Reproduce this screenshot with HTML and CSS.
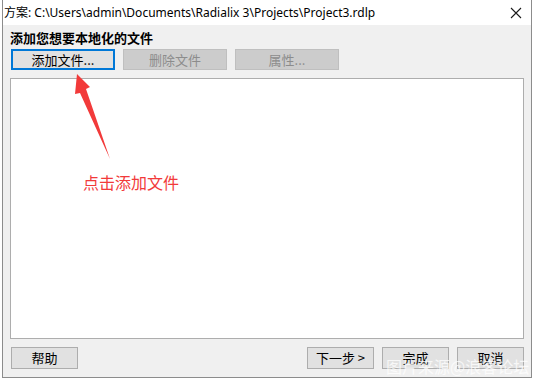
FILE: index.html
```html
<!DOCTYPE html>
<html lang="zh-CN">
<head>
<meta charset="UTF-8">
<title>添加文件</title>
<link rel="stylesheet" href="styles.css">
</head>
<body>

<div class="window">
    <div class="titlebar">
        <span class="title">方案: C:\Users\admin\Documents\Radialix 3\Projects\Project3.rdlp</span>
        <svg class="close" width="12" height="12" viewBox="0 0 12 12">
            <path d="M1 1 L11 11 M11 1 L1 11" stroke="#1a1a1a" stroke-width="1.1" fill="none"/>
        </svg>
    </div>

    <div class="content">
        <div class="heading">添加您想要本地化的文件</div>

        <div class="toolbar">
            <button class="btn focus">添加文件...</button>
            <button class="btn disabled">删除文件</button>
            <button class="btn disabled">属性...</button>
        </div>

        <div class="filelist"></div>

        <div class="footer">
            <button class="btn small">帮助</button>
            <div class="spacer"></div>
            <button class="btn small">下一步 &gt;</button>
            <button class="btn small">完成</button>
            <button class="btn small">取消</button>
        </div>
    </div>

    <!-- annotation drawn on top of the screenshot -->
    <svg class="arrow" width="60" height="100" viewBox="0 0 60 100">
        <polygon points="5,3 18,16 14,18 38,88 8,22 3,23" fill="#f23a3a"/>
    </svg>
    <div class="note">点击添加文件</div>
    <div class="watermark">图片来源@浪客论坛</div>
</div>

</body>
</html>
```

FILE: styles.css
```css
body {
    margin: 0;
    width: 534px;
    height: 380px;
    overflow: hidden;
    background-color: #ffffff;
    font-family: "Noto Sans", "Noto Sans CJK SC", sans-serif;
    font-size: 12px;
    color: #000;
}
.window {
    position: relative;
    box-sizing: border-box;
    margin-left: 2px;
    width: 530px;
    height: 378px;
    border: 1px solid #8c8c8c;
    border-top: none;
    background-color: #f0f0f0;
    display: flex;
    flex-direction: column;
}
.titlebar {
    height: 25px;
    background-color: #ffffff;
    display: flex;
    align-items: center;
    padding-left: 1px;
    padding-right: 9px;
}
.title {
    flex: 1;
    white-space: nowrap;
    line-height: 25px;
}
.close {
    display: block;
}
.content {
    flex: 1;
    display: flex;
    flex-direction: column;
    padding: 4px 7px 0 7px;
}
.heading {
    font-family: "Noto Sans CJK SC", sans-serif;
    font-weight: bold;
    font-size: 13px;
    line-height: 17px;
    padding-left: 0;
}
.toolbar {
    display: flex;
    gap: 8px;
    margin-top: 3px;
    padding-left: 1px;
}
.btn {
    box-sizing: border-box;
    height: 21px;
    width: 104px;
    padding: 0;
    border: 1px solid #adadad;
    background-color: #e1e1e1;
    font-family: "Noto Sans CJK SC", sans-serif;
    font-size: 13px;
    line-height: 18px;
    color: #000;
}
.btn.focus {
    border: 2px solid #0078d7;
    line-height: 16px;
}
.btn.disabled {
    background-color: #cccccc;
    border-color: #bfbfbf;
    color: #8c8c8c;
}
.filelist {
    margin-top: 8px;
    height: 261px;
    box-sizing: border-box;
    border: 1px solid #adadad;
    background-color: #ffffff;
}
.footer {
    display: flex;
    gap: 8px;
    margin-top: 8px;
    padding-left: 1px;
    padding-right: 0;
}
.btn.small {
    width: 67px;
    height: 22px;
}
.spacer {
    flex: 1;
}
.arrow {
    position: absolute;
    left: 69px;
    top: 71px;
}
.note {
    position: absolute;
    left: 80px;
    top: 172px;
    font-family: "Noto Sans CJK SC", sans-serif;
    font-size: 16px;
    line-height: 20px;
    color: #f23a3a;
}
.watermark {
    position: absolute;
    left: 383px;
    top: 356px;
    font-family: "Noto Sans CJK SC", sans-serif;
    font-size: 16px;
    line-height: 20px;
    color: rgba(255, 255, 255, 0.75);
    white-space: nowrap;
}
```
